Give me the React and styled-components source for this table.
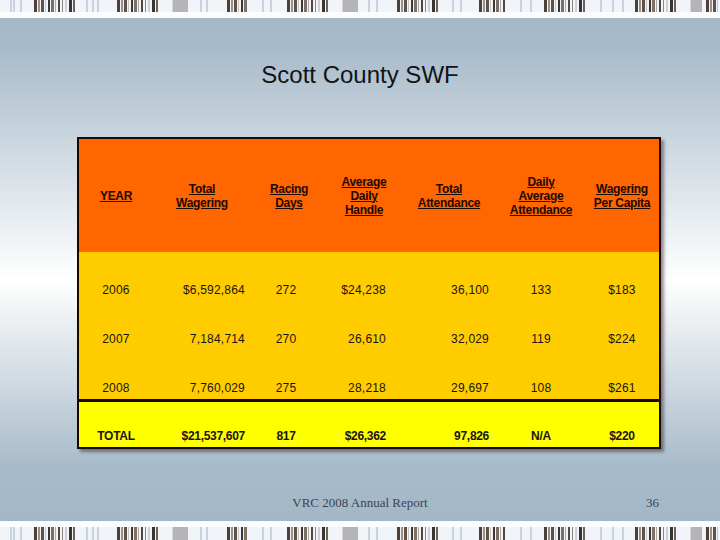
import React from 'react';
import styled, { createGlobalStyle } from 'styled-components';

const GlobalStyle = createGlobalStyle`
    html, body {
        margin: 0;
        padding: 0;
        width: 720px;
        height: 540px;
        overflow: hidden;
        background: #ffffff;
    }
`;

const Slide = styled.div`
    width: 720px;
    height: 540px;
    display: flex;
    flex-direction: column;
    font-family: "Liberation Sans", Arial, sans-serif;
`;

const Band = styled.div`
    height: ${props => props.h}px;
    display: flex;
    flex-direction: column;
    justify-content: ${props => props.bottom ? 'flex-end' : 'flex-start'};
    background: #fbfcfe;
`;

const Main = styled.div`
    flex: 1;
    display: flex;
    flex-direction: column;
    background: linear-gradient(180deg, #a5b8c7 0%, #a8bbca 6%, #ffffff 52%, #a8bbca 89%, #a4b7c6 100%);
`;

const Title = styled.h1`
    margin: 43px 0 0 0;
    font-size: 24px;
    line-height: 28px;
    font-weight: normal;
    text-align: center;
    color: #111418;
`;

const Table = styled.table`
    margin: 48px 0 0 77px;
    width: 582px;
    border-collapse: collapse;
    border: 2px solid #180800;
    box-shadow: 3px 3px 3px rgba(30, 20, 20, 0.45);
    table-layout: fixed;
`;

const Row = styled.tr`
    height: ${props => props.h}px;
    background: ${props => props.bg};
    border-top: ${props => props.divider ? '3px solid #180800' : 'none'};
`;

const Head = styled.th`
    padding: 0 2px;
    font-size: 12px;
    line-height: 14px;
    font-weight: bold;
    color: #1e0800;
    text-decoration: underline;
    text-align: center;
    vertical-align: middle;
    letter-spacing: -0.3px;
`;

const Cell = styled.td`
    padding: 0 ${props => props.pr || 0}px 4px ${props => props.pl || 0}px;
    font-size: 12px;
    line-height: 14px;
    font-weight: ${props => props.bold ? 'bold' : 'normal'};
    color: #1a1410;
    text-align: ${props => props.align || 'center'};
    vertical-align: bottom;
    letter-spacing: ${props => props.bold ? '-0.3px' : '0.2px'};
`;

const Footer = styled.div`
    margin-top: 46px;
    display: grid;
    grid-template-columns: 1fr auto 1fr;
    font-family: "Liberation Serif", "Times New Roman", serif;
    font-size: 13px;
    line-height: 16px;
    color: #3a4454;
`;

const PageNum = styled.span`
    justify-self: end;
    padding-right: 61px;
`;

const darkLines = [
    [0, 3, '#4a4038'], [4, 2, '#9a9088'], [7, 3, '#5c524a'], [11, 1, '#c8c4c0'],
    [14, 2, '#3e3630'], [17, 3, '#7a7068'], [21, 1, '#b0a8a0'], [24, 2, '#52483f'],
    [28, 1, '#8c8680'], [31, 2, '#d0d0d4'], [35, 3, '#3a3430'], [39, 2, '#6a625a'],
];

const darkGroups = [[34, 42], [117, 41], [227, 21], [287, 41], [397, 41], [479, 26], [544, 41], [635, 42], [706, 14]];
const grayGroups = [[172, 16], [342, 16], [690, 12]];
const faintLines = [10, 13, 20, 86, 92, 97, 200, 206, 262, 270, 368, 376, 452, 460, 520, 530, 600, 612, 622];

const Stripes = ({ h }) => (
    <svg width="720" height={h} viewBox={`0 0 720 ${h}`} style={{ display: 'block' }}>
        <rect width="720" height={h} fill="#f1f4f9" />
        {faintLines.map(x => (
            <rect key={'f' + x} x={x} width="2" height={h} fill="#c9d3e0" />
        ))}
        {grayGroups.map(([x, w]) => (
            <g key={'g' + x}>
                <rect x={x} width={w} height={h} fill="#b5b5b8" />
                <rect x={x} width="1" height={h} fill="#d6d6da" />
            </g>
        ))}
        {darkGroups.map(([x, w]) => (
            <g key={'d' + x}>
                {darkLines.filter(([o]) => o < w).map(([o, lw, c]) => (
                    <rect key={o} x={x + o} width={Math.min(lw, w - o)} height={h} fill={c} />
                ))}
            </g>
        ))}
    </svg>
);

const headers = [
    ['YEAR'],
    ['Total', 'Wagering'],
    ['Racing', 'Days'],
    ['Average', 'Daily', 'Handle'],
    ['Total', 'Attendance'],
    ['Daily', 'Average', 'Attendance'],
    ['Wagering', 'Per Capita'],
];

const widths = [75, 98, 76, 74, 96, 88, 75];

const rows = [
    ['2006', '$6,592,864', '272', '$24,238', '36,100', '133', '$183'],
    ['2007', '7,184,714', '270', '26,610', '32,029', '119', '$224'],
    ['2008', '7,760,029', '275', '28,218', '29,697', '108', '$261'],
];

const total = ['TOTAL', '$21,537,607', '817', '$26,362', '97,826', 'N/A', '$220'];

// per-column alignment of the figures
const colAlign = [
    { align: 'center' },
    { align: 'right', pr: 6 },
    { align: 'center', pr: 6 },
    { align: 'right', pr: 15 },
    { align: 'right', pr: 8 },
    { align: 'center' },
    { align: 'center' },
];

const App = () => (
    <Slide>
        <GlobalStyle />
        <Band h={18}>
            <Stripes h={12} />
        </Band>
        <Main>
            <Title>Scott County SWF</Title>
            <Table>
                <colgroup>
                    {widths.map((w, i) => <col key={i} style={{ width: w }} />)}
                </colgroup>
                <thead>
                    <Row h={114} bg="#ff6600">
                        {headers.map((lines, i) => (
                            <Head key={i}>
                                {lines.map((l, j) => <div key={j}>{l}</div>)}
                            </Head>
                        ))}
                    </Row>
                </thead>
                <tbody>
                    {rows.map((r, i) => (
                        <Row key={r[0]} h={i === 2 ? 50 : 49} bg="#ffcc00">
                            {r.map((v, j) => <Cell key={j} {...colAlign[j]}>{v}</Cell>)}
                        </Row>
                    ))}
                    <Row h={48} bg="#ffff00" divider>
                        {total.map((v, j) => <Cell key={j} bold {...colAlign[j]}>{v}</Cell>)}
                    </Row>
                </tbody>
            </Table>
            <Footer>
                <span />
                <span>VRC 2008 Annual Report</span>
                <PageNum>36</PageNum>
            </Footer>
        </Main>
        <Band h={19} bottom>
            <Stripes h={13} />
        </Band>
    </Slide>
);

export default App;
